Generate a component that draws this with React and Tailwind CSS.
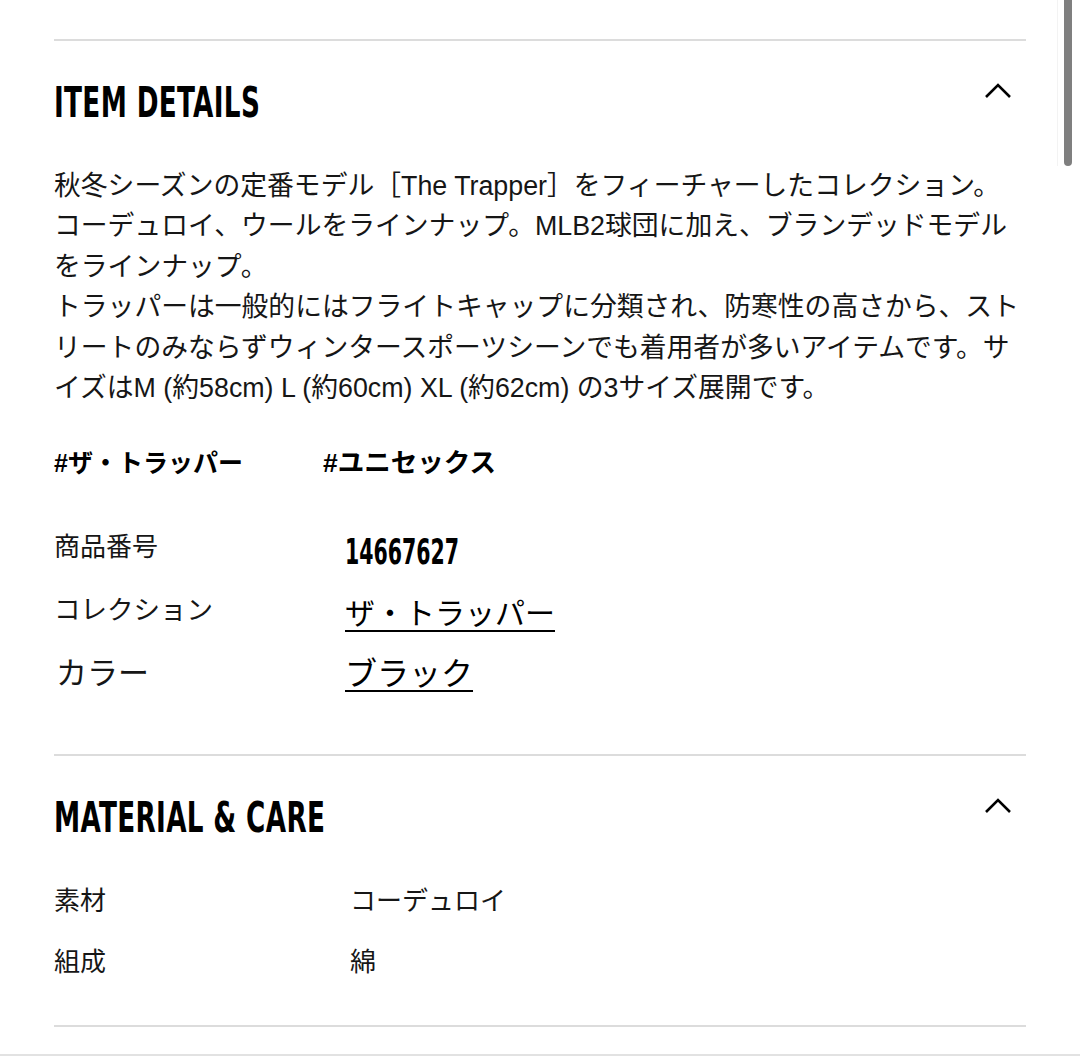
import React from "react";

const body = "font-['Liberation_Sans','Noto_Sans_CJK_JP',sans-serif]";
const cond = "font-['Liberation_Sans_Narrow','DejaVu_Sans_Condensed',sans-serif]";

function Chevron() {
  return (
    <svg width="28" height="16" viewBox="0 0 28 16" className="mr-[14px] mt-[0px]">
      <polyline points="2,14 14,2 26,14" fill="none" stroke="#000" strokeWidth="2.6" strokeLinecap="butt" strokeLinejoin="miter" />
    </svg>
  );
}

function Header({ title }) {
  return (
    <div className="mt-[42px] flex items-start justify-between">
      <div className="h-[40px] leading-[40px]">
        <span className={`${cond} inline-block origin-left scale-x-[0.695] text-[42px] font-bold tracking-[0.5px] text-black whitespace-nowrap`}>
          {title}
        </span>
      </div>
      <Chevron />
    </div>
  );
}

export default function App() {
  return (
    <div className={`relative w-[1080px] h-[1056px] overflow-hidden bg-white text-[#161616] ${body}`}>
      <div className="ml-[54px] w-[972px] pt-[39px]">
        <div className="h-[2px] bg-[#dcdcdc]" />
        <Header title="ITEM DETAILS" />

        <div className="mt-[43px] text-[26.8px] leading-[40.4px] whitespace-nowrap">
          <div>秋冬シーズンの定番モデル［The Trapper］をフィーチャーしたコレクション。</div>
          <div>コーデュロイ、ウールをラインナップ。MLB2球団に加え、ブランデッドモデル</div>
          <div>をラインナップ。</div>
          <div>トラッパーは一般的にはフライトキャップに分類され、防寒性の高さから、スト</div>
          <div>リートのみならずウィンタースポーツシーンでも着用者が多いアイテムです。サ</div>
          <div>イズはM (約58cm) L (約60cm) XL (約62cm) の3サイズ展開です。</div>
        </div>

        <div className="mt-[39px] flex h-[32px] items-center font-bold leading-[32px] text-black">
          <div className="w-[269px] whitespace-nowrap text-[25px]">#ザ・トラッパー</div>
          <div className="whitespace-nowrap text-[26.5px]">#ユニセックス</div>
        </div>

        <div className="mt-[37px] grid grid-cols-[291px_1fr]">
          <div className="flex h-[63px] items-center text-[26px]">商品番号</div>
          <div className="flex h-[63px] items-center pt-[8px]">
            <span className={`${cond} inline-block origin-left scale-x-[0.65] text-[35px] font-bold leading-[40px] text-black`}>14667627</span>
          </div>
          <div className="flex h-[63px] items-center text-[26.5px]">コレクション</div>
          <div className="flex h-[63px] items-center pt-[6px]">
            <span className="text-[30px] leading-[36px] text-black underline decoration-2 underline-offset-[6px]">ザ・トラッパー</span>
          </div>
          <div className="flex h-[63px] items-center pl-[2px] text-[31px]">カラー</div>
          <div className="flex h-[63px] items-center">
            <span className="text-[32px] leading-[38px] text-black underline decoration-2 underline-offset-[5px]">ブラック</span>
          </div>
        </div>

        <div className="mt-[49px] h-[2px] bg-[#dcdcdc]" />
        <Header title="MATERIAL & CARE" />

        <div className="mt-[33px] grid grid-cols-[296px_1fr] text-[26px]">
          <div className="flex h-[61px] items-center">素材</div>
          <div className="flex h-[61px] items-center">コーデュロイ</div>
          <div className="flex h-[61px] items-center">組成</div>
          <div className="flex h-[61px] items-center">綿</div>
        </div>

        <div className="mt-[32px] h-[2px] bg-[#dcdcdc]" />
      </div>

      <div className="absolute bottom-0 left-0 h-[2px] w-full bg-[#e2e2e2]" />
      <div className="absolute right-[22px] top-0 h-[166px] w-[1px] bg-[#f3f3f3]" />
      <div className="absolute right-[8px] top-0 h-[166px] w-[8px] rounded-b-[4px] bg-[#7f7f7f]" />
    </div>
  );
}
